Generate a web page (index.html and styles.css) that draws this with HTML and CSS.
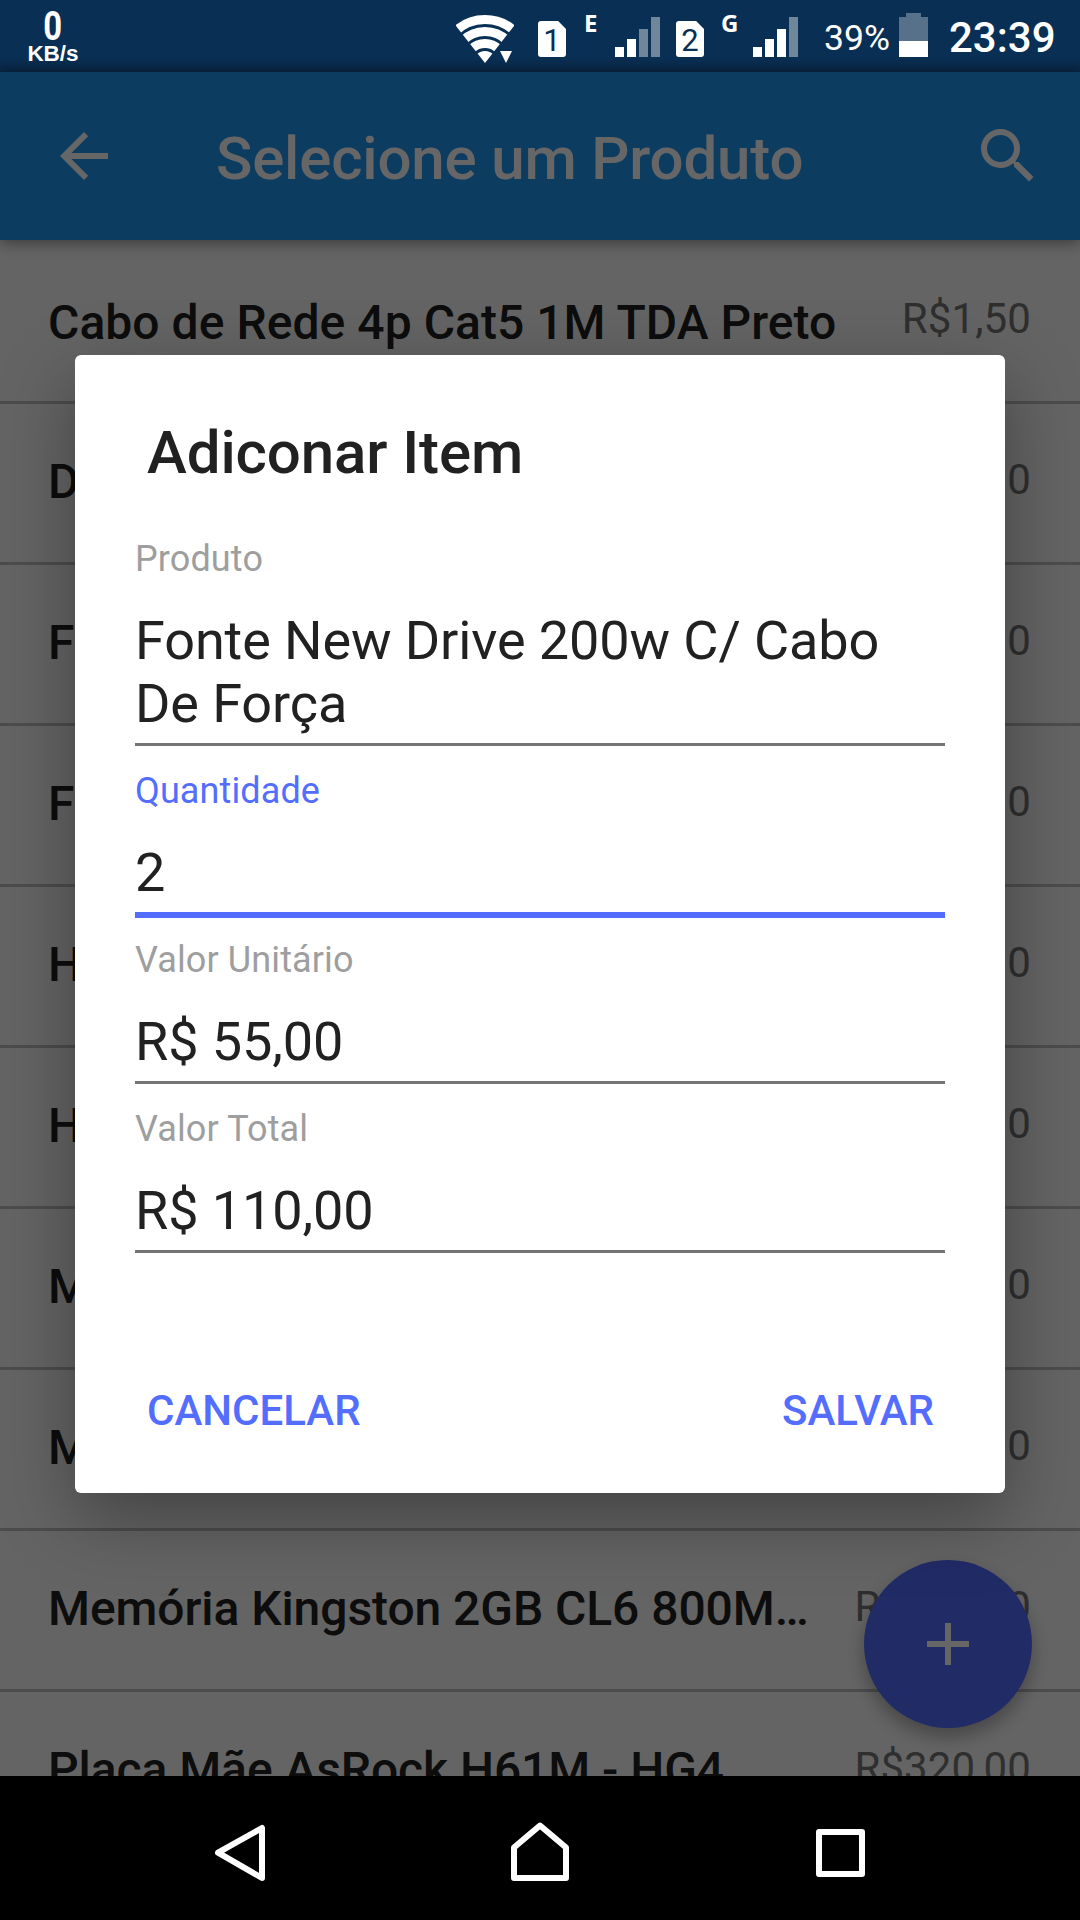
FILE: index.html
```html
<!DOCTYPE html>
<html lang="pt-BR">
<head>
<meta charset="utf-8">
<title>Selecione um Produto</title>
<link rel="stylesheet" href="styles.css">
</head>
<body>
<div class="phone">
  <div class="app">
    <header class="appbar">
      <svg class="back" viewBox="0 0 72 72" width="72" height="72" fill="#fff"><path d="M60 33H23.500L40.200 16.200 36 12 12 36l24 24 4.200-4.200L23.500 39H60z"/></svg>
      <h1 class="title">Selecione um Produto</h1>
      <svg class="search" viewBox="0 0 24 24" width="72" height="72" fill="#fff"><path d="M15.500 14h-.79l-.28-.27A6.471 6.471 0 0 0 16 9.500 6.500 6.500 0 1 0 9.500 16c1.610 0 3.090-.59 4.230-1.570l.27.28v.79l5 4.990L20.490 19l-4.990-5zm-6 0C7.010 14 5 11.990 5 9.500S7.010 5 9.500 5 14 7.010 14 9.500 11.990 14 9.500 14z"/></svg>
    </header>
    <main class="list">
      <div class="row"><span class="name">Cabo de Rede 4p Cat5 1M TDA Preto</span><span class="price">R$1,50</span></div>
      <div class="row"><span class="name">D</span><span class="price">00</span></div>
      <div class="row"><span class="name">F</span><span class="price">00</span></div>
      <div class="row"><span class="name">F</span><span class="price">00</span></div>
      <div class="row"><span class="name">H</span><span class="price">00</span></div>
      <div class="row"><span class="name">H</span><span class="price">00</span></div>
      <div class="row"><span class="name">M</span><span class="price">00</span></div>
      <div class="row"><span class="name">M</span><span class="price">00</span></div>
      <div class="row"><span class="name">Memória Kingston 2GB CL6 800M…</span><span class="price">R$120,00</span></div>
      <div class="row"><span class="name">Placa Mãe AsRock H61M - HG4</span><span class="price">R$320,00</span></div>
    </main>
    <div class="fab"><svg viewBox="0 0 42 42" width="42" height="42"><path d="M18 0h6v18h18v6H24v18h-6V24H0v-6h18z" fill="#fff"/></svg></div>
  </div>

  <div class="scrim">
    <section class="dialog">
      <h2 class="heading">Adiconar Item</h2>
      <div class="field"><span class="label">Produto</span><span class="value">Fonte New Drive 200w C/ Cabo De Força</span></div>
      <div class="field focused"><span class="label">Quantidade</span><span class="value">2</span></div>
      <div class="field"><span class="label">Valor Unitário</span><span class="value">R$ 55,00</span></div>
      <div class="field"><span class="label">Valor Total</span><span class="value">R$ 110,00</span></div>
      <div class="actions"><span>CANCELAR</span><span>SALVAR</span></div>
    </section>
  </div>

  <div class="status">
    <div class="speed"><span class="rate">0</span><span class="unit">KB/s</span></div>
    <svg class="wifi" viewBox="0 0 58 48" width="58" height="48">
      <defs><clipPath id="fan"><path d="M-5 4.500 29 48 63 4.500V-9H-5z"/></clipPath></defs>
      <g clip-path="url(#fan)" fill="none" stroke="#fff">
        <circle cx="29" cy="48" r="43.500" stroke-width="9"/>
        <circle cx="29" cy="48" r="31.500" stroke-width="9"/>
        <circle cx="29" cy="48" r="19.500" stroke-width="9"/>
        <circle cx="29" cy="48" r="6" stroke-width="12"/>
      </g>
      <path d="M44 36h12l-6 12z" fill="#fff"/>
    </svg>
    <span class="sim one">1</span>
    <span class="net e">E</span>
    <svg class="bars b1" viewBox="0 0 45 40" width="45" height="40" fill="#fff"><path d="M0 30h9v10H0zM12 22h9v18h-9z"/><path opacity=".42" d="M24 12h9v28h-9zM36 0h9v40h-9z"/></svg>
    <span class="sim two">2</span>
    <span class="net g">G</span>
    <svg class="bars b2" viewBox="0 0 45 40" width="45" height="40" fill="#fff"><path d="M0 30h9v10H0zM12 22h9v18h-9zM24 12h9v28h-9z"/><path opacity=".42" d="M36 0h9v40h-9z"/></svg>
    <span class="percent">39%</span>
    <svg class="battery" viewBox="0 0 29 44" width="29" height="44" fill="#fff"><path opacity=".32" d="M7 0h15v4h7v24H0V4h7z"/><path d="M0 28h29v16H0z"/></svg>
    <span class="clock">23:39</span>
  </div>

  <nav class="navbar">
    <svg viewBox="0 0 60 66" width="60" height="66"><path d="M52 9v50L8 33.700z"/></svg>
    <svg viewBox="0 0 60 66" width="60" height="66"><path d="M4 28.500 30 6.500l26 22V59H4z"/></svg>
    <svg viewBox="0 0 60 66" width="60" height="66"><path d="M9 13h43v42H9z"/></svg>
  </nav>
</div>
</body>
</html>
```
FILE: styles.css
```css
* { box-sizing: border-box; }
body { margin: 0; font-family: Roboto, "Noto Sans", sans-serif; }
svg { display: block; flex: none; }

.phone {
  position: relative;
  width: 1080px;
  height: 1920px;
  overflow: hidden;
  display: flex;
  flex-direction: column;
  background: #000;
}

/* Application behind the dialog */
.app {
  position: relative;
  isolation: isolate;
  height: 1776px;
  padding-top: 72px;
  overflow: hidden;
  background: #1976d2;
  display: flex;
  flex-direction: column;
}
.appbar {
  position: relative;
  z-index: 1;
  flex: none;
  height: 168px;
  padding: 0 36px 0 48px;
  display: flex;
  align-items: center;
  background: #2196f3;
  color: #fff;
  box-shadow: 0 3px 14px rgba(0, 0, 0, .42);
}
.title {
  flex: 1;
  margin: 5px 0 0 96px;
  font-size: 60px;
  line-height: 70px;
  font-weight: 500;
  letter-spacing: -.18px;
}
.list {
  flex: 1;
  padding-top: 3px;
  background: #fafafa;
}
.row {
  height: 161px;
  padding: 0 49px 0 48px;
  display: flex;
  justify-content: space-between;
  align-items: flex-start;
  border-bottom: 3px solid #bdbdbd;
  white-space: nowrap;
}
.name {
  padding-top: 50px;
  font-size: 48px;
  line-height: 56px;
  font-weight: 500;
  letter-spacing: -.07px;
  color: #212121;
}
.row:first-child .name {
  padding-top: 52px;
  letter-spacing: .05px;
}
.price {
  padding-top: 51px;
  font-size: 42px;
  line-height: 50px;
  letter-spacing: .1px;
  color: #757575;
}
.fab {
  position: absolute;
  left: 864px;
  top: 1560px;
  width: 168px;
  height: 168px;
  border-radius: 50%;
  display: grid;
  place-items: center;
  background: #536dfe;
  box-shadow: 0 9px 18px rgba(0, 0, 0, .3);
}

/* Dialog */
.scrim {
  position: absolute;
  inset: 0 0 144px;
  padding-top: 355px;
  background: rgba(0, 0, 0, .6);
  overflow: hidden;
}
.dialog {
  width: 930px;
  height: 1138px;
  margin: 0 auto;
  padding: 63px 60px 45px;
  border-radius: 6px;
  background: #fff;
  display: flex;
  flex-direction: column;
  box-shadow: 0 24px 72px rgba(0, 0, 0, .34);
}
.heading {
  margin: 0 0 39px 12px;
  font-size: 60px;
  line-height: 70px;
  font-weight: 500;
  letter-spacing: -.1px;
  color: #212121;
}
.field {
  display: flex;
  flex-direction: column;
  padding-top: 11px;
  border-bottom: 3px solid #757575;
  margin-bottom: 13px;
}
.label {
  font-size: 36px;
  line-height: 42px;
  letter-spacing: .12px;
  color: #9e9e9e;
}
.value {
  padding: 29px 0 8px;
  font-size: 54px;
  line-height: 63px;
  letter-spacing: -.1px;
  color: #212121;
}
.focused {
  border-bottom: 6px solid #536dfe;
  margin-bottom: 10px;
}
.focused .label { color: #536dfe; }
.actions {
  margin-top: auto;
  padding: 0 11px 0 12px;
  display: flex;
  justify-content: space-between;
  font-size: 42px;
  line-height: 74px;
  font-weight: 500;
  color: #536dfe;
}

/* System status bar */
.status {
  position: absolute;
  inset: 0 0 auto;
  height: 72px;
  display: flex;
  align-items: flex-start;
  color: #fff;
  background: linear-gradient(transparent 58px, rgba(0, 0, 0, .22));
}
.speed {
  width: 50px;
  margin: 9px 0 0 28px;
  display: flex;
  flex-direction: column;
  align-items: center;
}
.rate { font-size: 41px; line-height: 35px; font-weight: 700; transform: scaleX(.8); }
.unit { font: bold 22.500px/20px "Liberation Sans", sans-serif; }
.wifi { margin: 15px 0 0 378px; }
.sim {
  width: 28px;
  height: 36px;
  margin-top: 21px;
  border-radius: 3px;
  background: #fff;
  color: #0a2f54;
  clip-path: polygon(0 0, 72% 0, 100% 22%, 100% 100%, 0 100%);
  font-size: 31px;
  line-height: 39px;
  text-align: center;
}
.one { margin-left: 24px; }
.two { margin-left: 16px; }
.net { font: bold 24px/28px "Noto Sans", sans-serif; width: 20px; margin-top: 9px; }
.e { margin-left: 18px; }
.g { margin-left: 17px; }
.bars { margin-top: 17px; }
.b1 { margin-left: 11px; }
.b2 { margin-left: 12px; }
.percent { width: 68px; margin: 17px 0 0 26px; font-size: 35.500px; line-height: 42px; }
.battery { margin: 13px 0 0 7px; }
.clock { margin: 13px 0 0 21px; font-size: 42px; line-height: 50px; font-weight: 500; }

/* System navigation bar */
.navbar {
  height: 144px;
  padding: 43px 210px 0;
  display: flex;
  justify-content: space-between;
  background: #000;
}
.navbar path { fill: none; stroke: #fff; stroke-width: 6; stroke-linejoin: round; }
```
